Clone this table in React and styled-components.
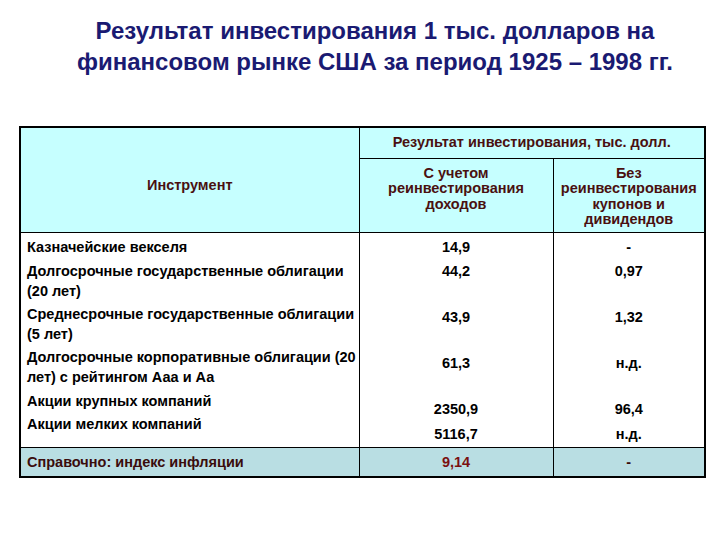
import React from "react";
import styled, { createGlobalStyle } from "styled-components";

const GlobalStyle = createGlobalStyle`
  html, body {
    margin: 0;
    padding: 0;
    background: #ffffff;
    font-family: "Liberation Sans", Arial, sans-serif;
  }
`;

const rows = [
  { name: ["Казначейские векселя"], a: "14,9", b: "-", h: 25, pt: 4, vt: 4 },
  { name: ["Долгосрочные государственные облигации", "(20 лет)"], a: "44,2", b: "0,97", h: 44, pt: 4, vt: 4 },
  { name: ["Среднесрочные государственные облигации", "(5 лет)"], a: "43,9", b: "1,32", h: 43, pt: 3, vt: 6 },
  { name: ["Долгосрочные корпоративные облигации (20", "лет) с рейтингом Ааа и Аа"], a: "61,3", b: "н.д.", h: 45, pt: 3, vt: 9 },
];

// shares: values of these two rows sit in one merged cell, as on the slide
const shares = [
  { name: "Акции крупных компаний", a: "2350,9", b: "96,4", h: 24, pt: 2 },
  { name: "Акции мелких компаний", a: "5116,7", b: "н.д.", h: 34, pt: 1 },
];

const App = () => {
  return (
    <Page>
      <GlobalStyle />
      <Title>
        Результат инвестирования 1 тыс. долларов на
        <br />
        финансовом рынке США за период 1925 – 1998 гг.
      </Title>
      <Table>
        <colgroup>
          <col style={{ width: 339 }} />
          <col style={{ width: 194 }} />
          <col />
        </colgroup>
        <thead>
          <tr>
            <HeadCell rowSpan={2} offset={12}>
              Инструмент
            </HeadCell>
            <HeadCell colSpan={2} height={31}>
              Результат инвестирования, тыс. долл.
            </HeadCell>
          </tr>
          <tr>
            <HeadCell height={74} top>
              С учетом
              <br />
              реинвестирования
              <br />
              доходов
            </HeadCell>
            <HeadCell height={74} top>
              Без
              <br />
              реинвестирования
              <br />
              купонов и
              <br />
              дивидендов
            </HeadCell>
          </tr>
        </thead>
        <tbody>
          {rows.map((r) => (
            <tr key={r.name[0]}>
              <NameCell height={r.h} pt={r.pt}>
                {r.name.map((line, i) => (
                  <Line key={i}>{line}</Line>
                ))}
              </NameCell>
              <ValueCell pt={r.vt}>{r.a}</ValueCell>
              <ValueCell pt={r.vt}>{r.b}</ValueCell>
            </tr>
          ))}
          <tr>
            <NameCell height={shares[0].h} pt={shares[0].pt}>
              <Line>{shares[0].name}</Line>
            </NameCell>
            <ValueCell rowSpan={2} pt={8} spread>
              {shares[0].a}
              <br />
              {shares[1].a}
            </ValueCell>
            <ValueCell rowSpan={2} pt={8} spread>
              {shares[0].b}
              <br />
              {shares[1].b}
            </ValueCell>
          </tr>
          <tr>
            <NameCell height={shares[1].h} pt={shares[1].pt}>
              <Line>{shares[1].name}</Line>
            </NameCell>
          </tr>
        </tbody>
        <tfoot>
          <tr>
            <FootCell align="left">Справочно: индекс инфляции</FootCell>
            <FootCell accent>9,14</FootCell>
            <FootCell>-</FootCell>
          </tr>
        </tfoot>
      </Table>
    </Page>
  );
};

const Page = styled.div`
  width: 720px;
  height: 540px;
  overflow: hidden;
  padding-top: 15px;
  box-sizing: border-box;
`;

const Title = styled.h1`
  margin: 0 0 49px 0;
  padding-left: 30px;
  text-align: center;
  font-family: "Liberation Sans", Arial, sans-serif;
  font-size: 24px;
  line-height: 31px;
  font-weight: bold;
  color: #1a1a72;
`;

const Table = styled.table`
  margin-left: 19px;
  width: 687px;
  border-collapse: collapse;
  table-layout: fixed;
  border: 2px solid #000;
  font-family: "Liberation Sans", Arial, sans-serif;
  font-size: 14.5px;
  font-weight: bold;
`;

const HeadCell = styled.th`
  height: ${(p) => (p.height ? `${p.height}px` : "auto")};
  padding: ${(p) => (p.top ? "7px 2px 0" : `${p.offset || 0}px 2px 0`)};
  vertical-align: ${(p) => (p.top ? "top" : "middle")};
  background: #c6ffff;
  color: #4a1010;
  font-weight: bold;
  line-height: 15.5px;
  text-align: center;
  border: 1px solid #000;
  box-sizing: border-box;
`;

const NameCell = styled.td`
  height: ${(p) => p.height}px;
  padding: ${(p) => p.pt}px 0 0 6px;
  vertical-align: top;
  color: #000;
  border-right: 1px solid #000;
  box-sizing: border-box;
`;

const Line = styled.div`
  line-height: 20px;
  white-space: nowrap;
`;

const ValueCell = styled.td`
  padding: ${(p) => p.pt}px 0 0;
  vertical-align: top;
  line-height: ${(p) => (p.spread ? "25px" : "20px")};
  text-align: center;
  color: #000;
  border-right: 1px solid #000;
`;

const FootCell = styled.td`
  height: 28px;
  padding: ${(p) => (p.align === "left" ? "0 0 0 6px" : "0")};
  text-align: ${(p) => p.align || "center"};
  background: #b9dee3;
  color: ${(p) => (p.accent ? "#7a1010" : "#3a0c0c")};
  border: 1px solid #000;
  border-bottom: 2px solid #000;
`;

export default App;
